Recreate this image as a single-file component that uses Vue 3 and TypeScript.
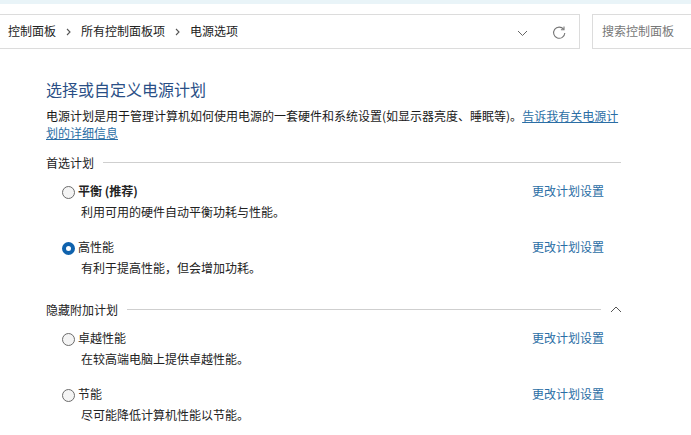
<script setup lang="ts">
interface Plan {
  name: string
  desc: string
  selected?: boolean
  bold?: boolean
}

const crumbs = ['控制面板', '所有控制面板项', '电源选项']

const preferred: Plan[] = [
  { name: '平衡 (推荐)', desc: '利用可用的硬件自动平衡功耗与性能。', bold: true },
  { name: '高性能', desc: '有利于提高性能，但会增加功耗。', selected: true }
]

const hidden: Plan[] = [
  { name: '卓越性能', desc: '在较高端电脑上提供卓越性能。' },
  { name: '节能', desc: '尽可能降低计算机性能以节能。' }
]

const groups = [
  { title: '首选计划', plans: preferred, collapsible: false },
  { title: '隐藏附加计划', plans: hidden, collapsible: true }
]
</script>

<template>
  <div class="window">
    <div class="top-strip"></div>

    <div class="toolbar">
      <div class="address">
        <template v-for="(crumb, i) in crumbs" :key="crumb">
          <span class="crumb">{{ crumb }}</span>
          <svg v-if="i < crumbs.length - 1" class="sep" width="5" height="8" viewBox="0 0 5 8">
            <path d="M1 1l3 3-3 3" fill="none" stroke="#555" stroke-width="1.1" />
          </svg>
        </template>
        <svg class="drop" width="11" height="7" viewBox="0 0 11 7">
          <path d="M1 1l4.5 4.5L10 1" fill="none" stroke="#666" stroke-width="1" />
        </svg>
        <svg class="refresh" width="14" height="14" viewBox="0 0 14 14">
          <path d="M11.6 3.2A5.6 5.6 0 1 0 12.8 7" fill="none" stroke="#777" stroke-width="1.1" />
          <path d="M12 .6v3.1H8.9" fill="none" stroke="#777" stroke-width="1.1" />
        </svg>
      </div>
      <div class="search"><span>搜索控制面板</span></div>
    </div>

    <main class="content">
      <h1 class="title">选择或自定义电源计划</h1>
      <p class="intro">
        电源计划是用于管理计算机如何使用电源的一套硬件和系统设置(如显示器亮度、睡眠等)。<a class="intro-link">告诉我有关电源计划的详细信息</a>
      </p>

      <section v-for="group in groups" :key="group.title" class="group">
        <div class="group-head">
          <span class="group-title">{{ group.title }}</span>
          <span class="rule"></span>
          <svg v-if="group.collapsible" class="collapse" width="12" height="7" viewBox="0 0 12 7">
            <path d="M1 6l5-5 5 5" fill="none" stroke="#555" stroke-width="1" />
          </svg>
        </div>

        <div v-for="plan in group.plans" :key="plan.name" class="plan">
          <div class="plan-main">
            <span class="radio" :class="{ 'radio--on': plan.selected }"></span>
            <span class="plan-name" :class="{ 'plan-name--bold': plan.bold }">{{ plan.name }}</span>
            <a class="plan-link">更改计划设置</a>
          </div>
          <div class="plan-desc">{{ plan.desc }}</div>
        </div>
      </section>
    </main>
  </div>
</template>

<style scoped>
.window {
  width: 691px;
  height: 435px;
  overflow: hidden;
  background: #fff;
  color: #222;
  font-family: "Noto Sans CJK SC", "Liberation Sans", sans-serif;
  font-size: 12px;
}

.top-strip {
  height: 4px;
  background: #e9f4f8;
}

/* toolbar */
.toolbar {
  display: flex;
  gap: 12px;
  margin-top: 10px;
  height: 35px;
}

.address {
  display: flex;
  align-items: center;
  width: 580px;
  box-sizing: border-box;
  padding-left: 8px;
  border: 1px solid #dcdcdc;
  border-left: 0;
}

.crumb {
  line-height: 17px;
  margin-top: -3px;
}

.sep {
  margin: 0 10px;
}

.drop {
  margin-left: auto;
  margin-top: 3px;
}

.refresh {
  margin-left: 24px;
  margin-right: 13px;
  margin-top: 3px;
}

.search {
  flex: 1;
  display: flex;
  align-items: center;
  padding-left: 9px;
  border: 1px solid #dcdcdc;
  border-right: 0;
  color: #777;
}

.search span {
  margin-top: -2px;
}

/* content */
.content {
  padding: 28px 70px 0 46px;
}

.title {
  margin: 0;
  font-size: 16px;
  font-weight: 400;
  line-height: 24px;
  color: #2a4f86;
}

.intro {
  margin: 6px 0 0;
  line-height: 17px;
  color: #1a1a1a;
}

.intro-link {
  color: #2b6ea5;
  text-decoration: underline;
}

.group {
  margin-top: 12px;
}

.group + .group {
  margin-top: 22px;
}

.group-head {
  display: flex;
  align-items: center;
  height: 18px;
  gap: 9px;
}

.group-title {
  white-space: nowrap;
}

.rule {
  flex: 1;
  height: 1px;
  background: #cfcfcf;
}

.collapse {
  margin-right: -1px;
}

.plan {
  margin: 0 0 14px 16px;
}

.group-head + .plan {
  margin-top: 9px;
}

.plan-main {
  display: flex;
  align-items: center;
  height: 21px;
}

.radio {
  box-sizing: border-box;
  width: 13px;
  height: 13px;
  margin-top: 4px;
  border: 1px solid #6b6b6b;
  border-radius: 50%;
  background: #f4f4f4;
}

.radio--on {
  border: 4px solid #0f62ad;
  background: #fff;
}

.plan-name {
  margin-left: 3px;
}

.plan-name--bold {
  font-weight: 700;
}

.plan-link {
  margin-left: auto;
  margin-right: 17px;
  color: #2b6ea5;
}

.plan-desc {
  margin-left: 19px;
  line-height: 21px;
}
</style>
